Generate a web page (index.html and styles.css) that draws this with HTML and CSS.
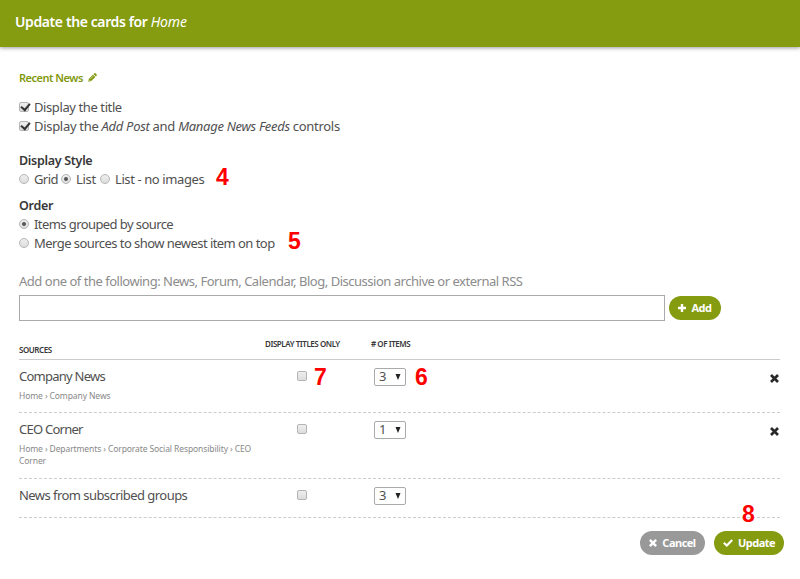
FILE: index.html
```html
<!DOCTYPE html>
<html lang="en">
<head>
<meta charset="utf-8">
<title>Update the cards for Home</title>
<link rel="stylesheet" href="styles.css">
</head>
<body>
<header class="bar"><h1><b>Update the cards for</b> <i>Home</i></h1></header>
<main>
  <h2 class="card-name"><span>Recent News</span>
    <svg width="9" height="9" viewBox="0 0 10 10"><path fill="#82990f" d="M.2 9.8 1 6.4 5.6 1.8 8.2 4.4 3.6 9zM6.2 1.2 7.1.4Q7.8-.2 8.4.4L9.6 1.6Q10.2 2.2 9.6 2.9L8.8 3.8z"/><path stroke="#fff" stroke-width=".6" d="M2.6 6.6 6 3.2M1.2 7.6 2.4 8.8"/></svg>
  </h2>
  <div class="options">
    <label class="opt"><span class="box checked"></span><span class="t1">Display the title</span></label>
    <label class="opt"><span class="box checked"></span><span class="t2">Display the <i>Add Post</i> and <i>Manage News Feeds</i> controls</span></label>
  </div>
  <h3>Display Style</h3>
  <div class="inline-opts">
    <label class="opt grid"><span class="radio"></span><span>Grid</span></label>
    <label class="opt list"><span class="radio on"></span><span>List</span></label>
    <label class="opt"><span class="radio"></span><span class="t3">List - no images</span></label>
  </div>
  <h3>Order</h3>
  <div class="order">
    <label class="opt"><span class="radio on"></span><span class="t4">Items grouped by source</span></label>
    <label class="opt"><span class="radio"></span><span class="t5">Merge sources to show newest item on top</span></label>
  </div>
  <p class="hint">Add one of the following: News, Forum, Calendar, Blog, Discussion archive or external RSS</p>
  <div class="add-row">
    <input type="text" class="source-input" aria-label="Source">
    <button class="btn add"><svg width="8" height="8" viewBox="0 0 8 8"><path stroke="#fff" stroke-width="2.4" d="M4 0v8M0 4h8"/></svg><span>Add</span></button>
  </div>
  <section class="sources">
    <div class="row head"><span class="c1">SOURCES</span><span class="c2">DISPLAY TITLES ONLY</span><span class="c3"># OF ITEMS</span></div>
    <div class="row r1">
      <div class="c1"><div class="name n1">Company News</div><div class="crumbs">Home › Company News</div></div>
      <div class="c2"><span class="box"></span></div>
      <div class="c3"><span class="select">3<svg width="6" height="6" viewBox="0 0 6 6"><path fill="#222" d="M.5 0h5L3 6z"/></svg></span></div>
      <svg class="remove" width="9" height="9" viewBox="0 0 9 9"><path stroke="#292929" stroke-width="2.7" d="M1 1l7 7M8 1 1 8"/></svg>
    </div>
    <div class="row r2">
      <div class="c1"><div class="name n2">CEO Corner</div><div class="crumbs">Home › Departments › Corporate Social Responsibility › CEO<br>Corner</div></div>
      <div class="c2"><span class="box"></span></div>
      <div class="c3"><span class="select">1<svg width="6" height="6" viewBox="0 0 6 6"><path fill="#222" d="M.5 0h5L3 6z"/></svg></span></div>
      <svg class="remove" width="9" height="9" viewBox="0 0 9 9"><path stroke="#292929" stroke-width="2.7" d="M1 1l7 7M8 1 1 8"/></svg>
    </div>
    <div class="row r3">
      <div class="c1"><div class="name n3">News from subscribed groups</div></div>
      <div class="c2"><span class="box"></span></div>
      <div class="c3"><span class="select">3<svg width="6" height="6" viewBox="0 0 6 6"><path fill="#222" d="M.5 0h5L3 6z"/></svg></span></div>
    </div>
  </section>
</main>
<footer>
  <button class="btn cancel"><svg width="8" height="8" viewBox="0 0 9 9"><path stroke="#fff" stroke-width="2.7" d="M1 1l7 7M8 1 1 8"/></svg><span>Cancel</span></button>
  <button class="btn update"><svg width="10" height="8" viewBox="0 0 10 8"><path fill="none" stroke="#fff" stroke-width="2.1" d="M.8 3.8 3.8 6.6 9.2 1"/></svg><span>Update</span></button>
</footer>
<span class="callout k4">4</span>
<span class="callout k5">5</span>
<span class="callout k6">6</span>
<span class="callout k7">7</span>
<span class="callout k8">8</span>
</body>
</html>
```
FILE: styles.css
```css
* { box-sizing: border-box; }
body { margin: 0; width: 800px; height: 579px; overflow: hidden; position: relative; background: #fff; color: #505050; font: 13px/19px "Noto Sans", sans-serif; letter-spacing: -.3px; white-space: nowrap; }
h1, h2, h3, p { margin: 0; }
.bar { height: 47px; padding: 11px 15px; background: #859b10; box-shadow: 0 1px 4px rgba(0,0,0,.4); }
h1 { color: #fff; font-size: 14px; line-height: 21px; font-weight: 400; letter-spacing: -.4px; }
h1 b { font-weight: 600; }
h1 i { letter-spacing: -.1px; }
main { padding: 21px 20px 0 19px; }
.card-name { display: flex; align-items: center; gap: 5px; height: 18px; font-size: 11px; font-weight: 600; color: #82990f; letter-spacing: -.5px; }
.options { padding-top: 12px; }
.opt { display: flex; height: 19px; align-items: center; }
.t1, .t3 { letter-spacing: -.4px; }
.t4 { letter-spacing: -.58px; }
.t5 { letter-spacing: -.55px; }
.box, .radio { flex: none; width: 10px; height: 10px; margin-right: 5px; position: relative; top: -1px; border: 1px solid #b4b4b4; background: linear-gradient(#eee, #ddd); }
.box { border-radius: 2px; display: inline-block; }
.radio { border-radius: 50%; }
.checked::after { content: ""; position: absolute; left: 1px; top: 0; width: 7px; height: 4px; border: solid #333; border-width: 0 0 2px 2px; transform: rotate(-50deg); }
.on::after { content: ""; position: absolute; left: 2px; top: 2px; width: 4px; height: 4px; border-radius: 50%; background: #555; }
h3 { margin-top: 16px; height: 18px; font-size: 12.5px; line-height: 18px; font-weight: 600; color: #383838; }
.inline-opts { display: flex; height: 19px; }
.grid { width: 42px; letter-spacing: -.6px; }
.list { width: 39px; }
.inline-opts + h3 { margin-top: 8px; }
.hint { margin-top: 19px; height: 19px; color: #8c8c8c; letter-spacing: -.48px; }
.add-row { display: flex; align-items: flex-start; gap: 4px; margin-top: 4px; }
.source-input { width: 646px; height: 26px; border: 1px solid #aaa; padding: 0 5px; background: #fff; }
.btn { display: flex; align-items: center; justify-content: center; gap: 5px; height: 24px; padding: 0 0 1px; border: 0; border-radius: 12px; color: #fff; background: #859b10; font: 700 11px/16px "Noto Sans", sans-serif; letter-spacing: -.5px; }
.add { width: 52px; margin-top: 1px; }
.row { display: flex; width: 761px; border-bottom: 1px dashed #ccc; }
.c1 { width: 245px; }
.c2 { width: 107px; }
.head { height: 39px; border-bottom: 1px solid #ccc; font-size: 8px; line-height: 12px; font-weight: 600; color: #383838; padding-top: 17px; letter-spacing: -.45px; }
.head .c1 { padding-top: 6px; }
.head .c2 { margin-left: 1px; }
.head .c3 { margin-left: -1px; }
.r1 { height: 53px; }
.r2 { height: 66px; }
.r3 { height: 39px; }
.name { height: 19px; margin-top: 7px; letter-spacing: -.55px; }
.n1, .n2 { letter-spacing: -.75px; }
.crumbs { margin-top: 4px; font-size: 8.5px; line-height: 12px; color: #888; letter-spacing: -.1px; }
.row:not(.head) .c2 { padding: 11px 0 0 33px; line-height: 0; }
.row:not(.head) .c3 { padding: 8px 0 0 3px; }
.row .box { top: 0; }
.select { display: flex; align-items: center; justify-content: space-between; width: 32px; height: 18px; padding: 0 4px 1px 4px; border: 1px solid #aaa; border-radius: 2px; }
.remove { margin: 14px 1px 0 auto; }
footer { display: flex; justify-content: flex-end; gap: 9px; padding: 13px 16px 0 0; }
.cancel { width: 65px; background: #999; }
.update { width: 70px; }
.callout { position: absolute; color: #f00; font: bold 23px/24px "Liberation Sans", sans-serif; letter-spacing: 0; }
.k4 { left: 216px; top: 165px; }
.k5 { left: 288px; top: 229px; }
.k6 { left: 415px; top: 365px; }
.k7 { left: 314px; top: 365px; }
.k8 { left: 742px; top: 502px; }
```
